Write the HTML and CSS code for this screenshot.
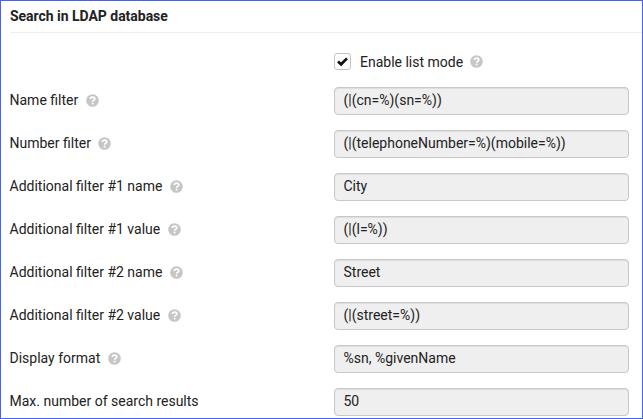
FILE: index.html
```html
<!DOCTYPE html>
<html lang="en">
<head>
<meta charset="utf-8">
<title>Search in LDAP database</title>
<link rel="stylesheet" href="styles.css">
</head>
<body>
<svg width="0" height="0" class="defs"><symbol id="help" viewBox="0 0 13 13"><circle cx="6.5" cy="6.5" r="6.3" fill="#c6c6c6"/><path d="M4.3 5C4.3 3.6 5.2 3.1 6.5 3.1S8.8 3.8 8.8 4.9C8.8 6.3 6.6 6.2 6.6 7.8" fill="none" stroke="#fff" stroke-width="1.7"/><path d="M5.7 8.7h1.8v1.7H5.7z" fill="#fff"/></symbol></svg>
<main class="panel">
<h1 class="title">Search in LDAP database</h1>
<form class="form">
<div class="row check-row"><span></span><label class="check"><span class="box"><svg viewBox="0 0 15 15"><path d="M3 7.5 6.1 10.3 12 4.4"/></svg></span><span>Enable list mode</span><svg class="help"><use href="#help"/></svg></label></div>
<div class="row"><label>Name filter <svg class="help"><use href="#help"/></svg></label><div class="field">(|(cn=%)(sn=%))</div></div>
<div class="row"><label>Number filter <svg class="help"><use href="#help"/></svg></label><div class="field">(|(telephoneNumber=%)(mobile=%))</div></div>
<div class="row"><label>Additional filter #1 name <svg class="help"><use href="#help"/></svg></label><div class="field">City</div></div>
<div class="row"><label>Additional filter #1 value <svg class="help"><use href="#help"/></svg></label><div class="field">(|(l=%))</div></div>
<div class="row"><label>Additional filter #2 name <svg class="help"><use href="#help"/></svg></label><div class="field">Street</div></div>
<div class="row"><label>Additional filter #2 value <svg class="help"><use href="#help"/></svg></label><div class="field">(|(street=%))</div></div>
<div class="row"><label>Display format <svg class="help"><use href="#help"/></svg></label><div class="field">%sn, %givenName</div></div>
<div class="row"><label>Max. number of search results</label><div class="field">50</div></div>
</form>
</main>
</body>
</html>
```
FILE: styles.css
```css
* { box-sizing: border-box; }
body { margin: 0; font: 14px/20px Roboto, sans-serif; color: #222; background: #fff; }
.defs { display: none; }
.panel { height: 419px; overflow: hidden; border: 1px solid #4361ff; padding-left: 9px; }
.title { margin: 0; height: 32px; padding-top: 5px; font-size: 14px; line-height: 20px; font-weight: 700; letter-spacing: -0.03px; border-bottom: 1px solid #eee; }
.form { padding-top: 19px; }
.row { display: grid; grid-template-columns: 324px 295px; height: 28px; margin-bottom: 15px; }
.check-row { height: 20px; }
.row label { display: flex; align-items: center; gap: 7.5px; height: 26px; margin-left: -0.5px; }
.row .check { height: 19px; margin-left: 0; gap: 8px; }
.check .box { width: 17px; height: 17px; margin-right: 1px; border: 1px solid #c4c4c4; border-radius: 3px; }
.box svg { display: block; width: 15px; height: 15px; fill: none; stroke: #111; stroke-width: 2.7; }
.help { width: 13px; height: 13px; flex: none; }
.row .check .help { margin-left: -1px; }
.field { height: 28px; padding: 2px 8.5px; border: 1px solid #c8c8c8; border-radius: 4px; background: #efefef; box-shadow: inset 0 1px 1px rgba(0, 0, 0, .075); }
```
